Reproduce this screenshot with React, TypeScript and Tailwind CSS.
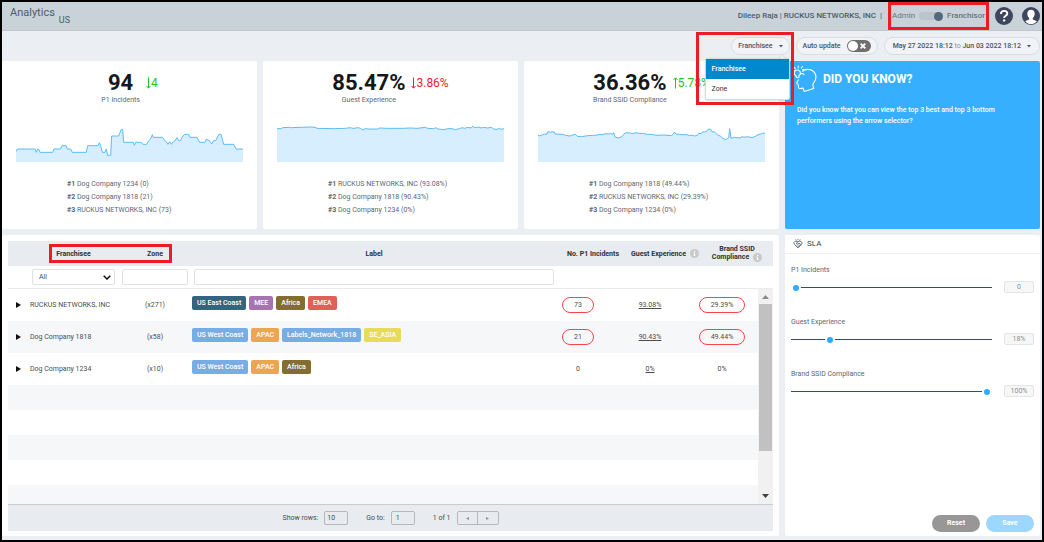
// Analytics dashboard for franchisors (incidents, guest experience, SSID compliance)
import { useState } from 'react';
import type { ReactNode } from 'react';
import clsx from 'clsx';

interface Kpi {
    title: string;
    value: string;
    delta: string;
    direction: 'up' | 'down';
    good: boolean;
    ranking: string[];
    /** Line of the area chart, in a 681 x 108 box */
    points: string;
}

const kpis: Kpi[] = [
    {
        title: 'P1 Incidents',
        value: '94',
        delta: '4',
        direction: 'down',
        good: true,
        ranking: ['Dog Company 1234 (0)', 'Dog Company 1818 (21)', 'RUCKUS NETWORKS, INC (73)'],
        points:
            '0,77 4,69 57,69 61,79 65,69 69,71 72,79 110,79 114,69 134,69 138,59 150,59 154,69 164,69 169,79 211,79 215,59 246,59 250,50 254,59 259,79 267,79 271,69 275,88 284,88 287,30 308,30 316,10 320,10 323,49 352,49 355,58 359,49 376,49 381,55 392,55 398,44 403,40 409,26 412,34 440,34 446,44 451,47 456,55 461,47 466,55 472,46 476,46 483,35 488,44 493,44 500,31 506,25 518,25 522,34 543,34 551,49 567,49 571,39 581,45 587,54 593,44 599,44 608,25 615,25 623,55 653,55 660,69 681,69',
    },
    {
        title: 'Guest Experience',
        value: '85.47%',
        delta: '3.86%',
        direction: 'down',
        good: false,
        ranking: ['RUCKUS NETWORKS, INC (93.08%)', 'Dog Company 1818 (90.43%)', 'Dog Company 1234 (0%)'],
        points:
            '0,8 13,8 17,5 40,4 44,5 70,4 100,3 114,4 120,7 170,8 205,7 220,5 228,7 244,5 250,7 258,12 264,8 275,9 302,9 308,6 330,7 380,7 400,6 420,7 445,4 452,7 470,8 477,5 483,9 500,11 512,8 525,8 535,11 547,8 556,5 563,7 572,4 582,6 588,1 594,5 606,3 612,6 620,4 632,6 643,4 650,9 660,10 668,7 672,10 681,8',
    },
    {
        title: 'Brand SSID Compliance',
        value: '36.36%',
        delta: '5.78%',
        direction: 'up',
        good: true,
        ranking: ['Dog Company 1818 (49.44%)', 'RUCKUS NETWORKS, INC (29.39%)', 'Dog Company 1234 (0%)'],
        points:
            '0,25 3,30 12,27 20,24 26,25 29,17 38,19 42,17 49,18 51,24 75,25 82,28 96,30 104,27 112,25 118,31 130,32 150,29 166,28 178,27 186,25 192,26 204,23 212,24 218,22 224,25 227,20 231,33 240,36 252,32 258,24 262,20 275,21 285,23 292,20 304,22 316,22 328,25 342,25 352,28 378,27 400,29 406,24 409,18 414,24 424,25 434,26 446,26 455,29 464,27 470,30 478,28 482,22 490,23 494,17 500,18 506,16 511,9 518,10 522,17 530,18 538,26 548,31 554,36 562,41 568,38 572,35 575,8 579,37 590,34 606,36 612,32 618,34 628,32 642,35 654,30 660,26 668,24 674,22 681,21',
    },
];

const labelColors = {
    east: 'bg-[#35657c]',
    mee: 'bg-[#a874b0]',
    africa: 'bg-[#836e2f]',
    emea: 'bg-[#df6059]',
    west: 'bg-[#77ade4]',
    apac: 'bg-[#eda54f]',
    asia: 'bg-[#e7db5b]',
};

interface Row {
    name: string;
    zones: string;
    labels: { text: string; color: keyof typeof labelColors }[];
    incidents: string;
    experience: string;
    compliance: string;
    breached: boolean;
}

const rows: Row[] = [
    {
        name: 'RUCKUS NETWORKS, INC',
        zones: '(x271)',
        labels: [
            { text: 'US East Coast', color: 'east' },
            { text: 'MEE', color: 'mee' },
            { text: 'Africa', color: 'africa' },
            { text: 'EMEA', color: 'emea' },
        ],
        incidents: '73',
        experience: '93.08%',
        compliance: '29.39%',
        breached: true,
    },
    {
        name: 'Dog Company 1818',
        zones: '(x58)',
        labels: [
            { text: 'US West Coast', color: 'west' },
            { text: 'APAC', color: 'apac' },
            { text: 'Labels_Network_1818', color: 'west' },
            { text: 'SE_ASIA', color: 'asia' },
        ],
        incidents: '21',
        experience: '90.43%',
        compliance: '49.44%',
        breached: true,
    },
    {
        name: 'Dog Company 1234',
        zones: '(x10)',
        labels: [
            { text: 'US West Coast', color: 'west' },
            { text: 'APAC', color: 'apac' },
            { text: 'Africa', color: 'africa' },
        ],
        incidents: '0',
        experience: '0%',
        compliance: '0%',
        breached: false,
    },
];

const slas = [
    { id: 'sla-p1', label: 'P1 Incidents', initial: 0, unit: '' },
    { id: 'sla-guest', label: 'Guest Experience', initial: 18, unit: '%' },
    { id: 'sla-ssid', label: 'Brand SSID Compliance', initial: 100, unit: '%' },
];

/** Red frame drawn over a part of the page */
function Highlight({ className }: { className: string }) {
    return <div className={clsx('pointer-events-none absolute border-3 border-[#ed1c24]', className)} />;
}

function Pill({ children, className }: { children: ReactNode; className?: string }) {
    return (
        <div
            className={clsx(
                'flex h-[18px] items-center rounded-full border border-[#d9dde2] bg-[#f1f3f7] font-medium text-[#4a5560]',
                className,
            )}
        >
            {children}
        </div>
    );
}

function Caret() {
    return (
        <svg className="h-[3px] w-1" viewBox="0 0 4 3" fill="currentColor" aria-hidden="true">
            <path d="M0 0h4L2 2.6z" />
        </svg>
    );
}

function InfoIcon() {
    return (
        <svg className="size-[9px] shrink-0" viewBox="0 0 18 18" aria-hidden="true">
            <circle cx="9" cy="9" r="9" fill="#c9c9c9" />
            <path d="M8 3.6h2.4v2.2H8zM7 7.4h3.2v5.4h1.2v1.4H6.8v-1.4H8V8.8H7z" fill="#fff" />
        </svg>
    );
}

function HeadIcon() {
    return (
        <svg
            className="h-7 w-6 shrink-0"
            viewBox="0 0 24 28"
            fill="none"
            stroke="#fff"
            strokeWidth="1.1"
            strokeLinecap="round"
            strokeLinejoin="round"
            aria-hidden="true"
        >
            <path d="M9.5 6.2C11 5 13 4.3 15 4.4c4.600 0 8 3.400 8 7.600 0 2.600-1 4.500-2.500 6.200-.9 1.100-.9 2-.4 3.500l.6 1.700-9.500 3-1.200-3.400c-1.500.5-3 .9-4 .1-.9-.8-.5-2.200-.7-3.300-.2-1-.9-1-1.500-1.400-.6-.5 1.200-2.300 1.500-3.600" />
            <path d="M3.600 12.500 3 10.800C1.800 10.200 1 9 1.200 7.700c.2-1.700 1.700-2.900 3.400-2.700 1.800.2 3 1.700 2.800 3.400-.1 1-.7 1.800-1.500 2.300l.1 1.600zM7.500 9c1.500-.8 3-.5 3.500.6" />
            <path d="M5.200 1v1.700M1.200 2.200l1 1.500M9.500 1.500 8.300 3M.2 5.200l.8.3M11 4.200l-1.600.8" />
        </svg>
    );
}

function SlaIcon() {
    return (
        <svg
            className="size-[10px]"
            viewBox="0 0 20 20"
            fill="none"
            stroke="#5d6972"
            strokeWidth="1.8"
            strokeLinejoin="round"
            aria-hidden="true"
        >
            <path d="M1.500 7.500 5 4l4 1.500L14 4l4.500 3.500-2 4L10 18l-6.500-6.500z" />
            <path d="M9 5.500 7 9l2.500 1 2.500-2 4.500 4M6 13l2-2M8.500 15l2-2M12 15.500l-2-2M14 13.500l-2.500-2.300M10 0v2.500M5.500 1l1 2M14.500 1l-1 2" />
        </svg>
    );
}

function Header() {
    return (
        <header className="flex h-[29px] items-center border-b border-[#bfc8cf] bg-[#c9d2d9] text-[#4d5b66]">
            <h1 className="self-start pt-1 pl-2 text-[11px] leading-[14px]">Analytics</h1>
            <span className="pt-2.5 pl-1 text-[9px]">US</span>
            <div className="ml-auto flex items-center pr-0.5">
                <span className="text-[8px] font-medium">Dileep Raja | RUCKUS NETWORKS, INC &nbsp;|</span>
                <div className="relative ml-2.5 flex items-center text-[8px] text-[#66727c]">
                    <span>Admin</span>
                    <label className="mx-1 flex h-2 w-6 items-center justify-end rounded-full bg-[#bcc4cb]">
                        <input type="checkbox" role="switch" defaultChecked className="sr-only" aria-label="Franchisor" />
                        <span className="size-[9px] rounded-full bg-[#51697a]" />
                    </label>
                    <span className="font-medium">Franchisor</span>
                    <Highlight className="-inset-x-1 -inset-y-2" />
                </div>
                <button type="button" className="ml-2.5 size-[18px]" aria-label="Help">
                    <svg className="size-full" viewBox="0 0 18 18" aria-hidden="true">
                        <circle cx="9" cy="9" r="9" fill="#3d465e" />
                        <path
                            d="M5.900 7c0-1.900 1.300-3.100 3.200-3.100s3.200 1.100 3.200 2.800c0 2-3.200 2.200-3.200 4.200"
                            fill="none"
                            stroke="#fff"
                            strokeWidth="1.900"
                        />
                        <circle cx="9.100" cy="13.400" r="1.200" fill="#fff" />
                    </svg>
                </button>
                <button type="button" className="ml-[9px] size-[18px]" aria-label="Account">
                    <svg className="size-full" viewBox="0 0 18 18" aria-hidden="true">
                        <circle cx="9" cy="9" r="9" fill="#3d465e" />
                        <path
                            d="M9 2.800c2.300 0 3.700 1.600 3.700 3.900 0 1.900-.8 3.500-1.900 4.400v1.300c2 .6 3.300 1.100 4 2.100A8.200 8.200 0 0 1 9 17.200a8.200 8.200 0 0 1-5.800-2.700c.7-1 2-1.500 4-2.100v-1.300c-1.100-.9-1.900-2.500-1.900-4.400 0-2.300 1.400-3.900 3.700-3.900z"
                            fill="#fff"
                        />
                    </svg>
                </button>
            </div>
        </header>
    );
}

function Toolbar() {
    return (
        <div className="flex h-[30px] items-center justify-end gap-1.5 text-[7px]">
            <div className="relative z-10">
                <Pill>
                    <button type="button" className="flex items-center gap-1.5 px-1.5" aria-haspopup="listbox" aria-expanded="true">
                        Franchisee <Caret />
                    </button>
                </Pill>
                {/* Open grouping menu */}
                <svg className="absolute top-[18px] right-1 h-1 w-2" viewBox="0 0 8 4" fill="#fff" stroke="#d5d9dd" aria-hidden="true">
                    <path d="M0 4l4-3.500L8 4" />
                </svg>
                <ul
                    role="listbox"
                    aria-label="Group by"
                    className="absolute top-[21px] right-0 w-[85px] rounded-xs border border-[#d5d9dd] bg-white shadow-sm"
                >
                    <li role="option" aria-selected="true" className="flex h-5 items-center bg-[#0088ce] px-1.5 font-medium text-white">
                        Franchisee
                    </li>
                    <li role="option" aria-selected="false" className="flex h-5 items-center px-1.5 text-[#333]">
                        Zone
                    </li>
                </ul>
                <Highlight className="-top-[5px] -right-1 h-[73px] w-[98px]" />
            </div>
            <Pill className="gap-1.5 px-1.5">
                <span>Auto update</span>
                <label className="flex h-3 w-6 items-center justify-between rounded-full bg-[#6f6f6f] px-px">
                    <input type="checkbox" role="switch" className="sr-only" aria-label="Auto update" />
                    <span className="size-[10px] rounded-full bg-white" />
                    <svg className="mr-1 size-[6px]" viewBox="0 0 6 6" stroke="#fff" strokeWidth="1.900" aria-hidden="true">
                        <path d="M.7.7l4.600 4.600M5.300.7.7 5.300" />
                    </svg>
                </label>
            </Pill>
            <Pill>
                <button type="button" className="flex items-center gap-1.5 px-2">
                    <span>
                        May 27 2022 18:12 <span className="font-normal text-[#8a949c]">to</span> Jun 03 2022 18:12
                    </span>
                    <Caret />
                </button>
            </Pill>
        </div>
    );
}

function KpiCard({ kpi }: { kpi: Kpi }) {
    return (
        <section className="flex flex-col rounded-xs bg-white px-3.5 pt-2.5">
            <div className="flex justify-center gap-1.5">
                <div className="flex flex-col items-center">
                    <strong className="text-[22px] leading-6 font-bold text-[#15181b]">{kpi.value}</strong>
                    <h2 className="text-[7px] leading-[10px] text-[#5b6770]">{kpi.title}</h2>
                </div>
                <div className={clsx('flex h-6 items-center text-[12px]', kpi.good ? 'text-[#23c423]' : 'text-[#ed1c24]')}>
                    <svg
                        className={clsx('h-3 w-[5px]', kpi.direction === 'up' && 'rotate-180')}
                        viewBox="0 0 5 12"
                        fill="none"
                        stroke="currentColor"
                        aria-hidden="true"
                    >
                        <path d="M2.500.5v10.500M.5 9l2 2.200L4.500 9" />
                    </svg>
                    {kpi.delta}
                </div>
            </div>
            <svg className="mt-[21px] h-9 w-full" viewBox="0 0 681 108" preserveAspectRatio="none" aria-hidden="true">
                <polygon points={`0,108 ${kpi.points} 681,108`} fill="#d6eeff" />
                <polyline points={kpi.points} fill="none" stroke="#5cbcf8" vectorEffect="non-scaling-stroke" />
            </svg>
            <ol className="mt-4 pb-3 pl-[51px] text-[7px] leading-[13px] text-[#5b6770]">
                {kpi.ranking.map((entry, i) => (
                    <li key={entry}>
                        <b>#{i + 1}</b> {entry}
                    </li>
                ))}
            </ol>
        </section>
    );
}

function TipCard() {
    return (
        <section className="rounded-xs bg-[#36afff] pt-1 text-white">
            <div className="flex items-center gap-1.5 pl-2">
                <HeadIcon />
                <h2 className="text-[12px] font-bold">DID YOU KNOW?</h2>
            </div>
            <p className="px-3 pt-3 text-[7px] leading-[11px] font-medium">
                Did you know that you can view the top 3 best and top 3 bottom performers using the arrow selector?
            </p>
        </section>
    );
}

const numCell = 'flex w-[72px] shrink-0 items-center justify-center';

function FranchiseeTable() {
    return (
        <section className="col-span-3 rounded-xs bg-white px-1.5 pt-1.5 pb-[5px]">
            <table className="flex flex-col text-[7px] leading-2 text-[#4c4c4c]">
                <thead className="block">
                    <tr className="flex h-[25px] items-stretch bg-[#e8ebef] font-bold text-[#2b3238]">
                        <th className="w-5 shrink-0" aria-label="Expand" />
                        <th className="relative flex w-[91px] shrink-0 items-center justify-center">
                            Franchisee
                            <Highlight className="top-[3px] left-[21px] h-[19px] w-[123px]" />
                        </th>
                        <th className="flex w-[72px] shrink-0 items-center justify-center">Zone</th>
                        <th className="flex flex-1 items-center justify-center">Label</th>
                        <th className={numCell}>No. P1 Incidents</th>
                        <th className={clsx(numCell, 'gap-1')}>
                            Guest Experience <InfoIcon />
                        </th>
                        <th className={clsx(numCell, 'flex-col')}>
                            <span>Brand SSID</span>
                            <span className="flex gap-1">
                                Compliance <InfoIcon />
                            </span>
                        </th>
                    </tr>
                    <tr className="flex h-[23px] items-center border-b border-[#e9ebed]">
                        <td className="w-5 shrink-0" />
                        <td className="relative w-[91px] shrink-0 px-1">
                            <select
                                aria-label="Filter by franchisee"
                                className="block h-4 w-full appearance-none rounded-xs border border-[#dfe2e5] bg-white px-1.5"
                            >
                                <option>All</option>
                            </select>
                            <svg
                                className="pointer-events-none absolute top-1.5 right-2 h-[5px] w-2"
                                viewBox="0 0 8 5"
                                fill="none"
                                stroke="#111"
                                strokeWidth="1.500"
                                aria-hidden="true"
                            >
                                <path d="M.7.7 4 4 7.300.7" />
                            </svg>
                        </td>
                        <td className="w-[72px] shrink-0 px-[3px]">
                            <input aria-label="Filter by zone" className="block h-4 w-full rounded-xs border border-[#dfe2e5] px-1" />
                        </td>
                        <td className="flex-1 px-[3px]">
                            <input aria-label="Filter by label" className="block h-4 w-full rounded-xs border border-[#dfe2e5] px-1" />
                        </td>
                        <td className={numCell} />
                        <td className={numCell} />
                        <td className={numCell} />
                    </tr>
                </thead>
                <tbody className="relative block h-[215px] overflow-hidden pr-[15px]">
                    {rows.map((row) => (
                        <tr key={row.name} className="flex h-8 items-center even:bg-[#f6f7f9]">
                            <td className="flex w-5 shrink-0 justify-center">
                                <button type="button" aria-label={`Expand ${row.name}`}>
                                    <svg className="h-[6px] w-[5px]" viewBox="0 0 5 6" fill="#111" aria-hidden="true">
                                        <path d="M0 0l5 3-5 3z" />
                                    </svg>
                                </button>
                            </td>
                            <td className="w-[91px] shrink-0 pl-0.5">{row.name}</td>
                            <td className="w-[72px] shrink-0 text-center">{row.zones}</td>
                            <td className="flex flex-1 gap-[3px] pb-1 pl-px">
                                {row.labels.map((label) => (
                                    <span
                                        key={label.text}
                                        className={clsx(
                                            'flex h-[14px] items-center rounded-xs px-[5px] font-medium text-white',
                                            labelColors[label.color],
                                        )}
                                    >
                                        {label.text}
                                    </span>
                                ))}
                            </td>
                            <td className={numCell}>
                                <span
                                    className={clsx(
                                        'flex h-4 items-center justify-center rounded-full border px-[11px]',
                                        row.breached ? 'border-[#f0484c]' : 'border-transparent',
                                    )}
                                >
                                    {row.incidents}
                                </span>
                            </td>
                            <td className={numCell}>
                                <a href="#experience" className="underline">
                                    {row.experience}
                                </a>
                            </td>
                            <td className={numCell}>
                                <span
                                    className={clsx(
                                        'flex h-4 items-center justify-center rounded-full border px-[11px]',
                                        row.breached ? 'border-[#f0484c]' : 'border-transparent',
                                    )}
                                >
                                    {row.compliance}
                                </span>
                            </td>
                        </tr>
                    ))}
                    {/* Empty rows keep the striping down to the pager */}
                    {[0, 1, 2, 3, 4].map((n) => (
                        <tr key={n} className="flex h-[25px] even:bg-[#f6f7f9]">
                            <td className="flex-1" />
                        </tr>
                    ))}
                    <tr className="absolute inset-y-0 right-0 flex w-[15px]">
                        <td className="flex flex-1 flex-col items-center bg-[#f1f1f1]">
                            <svg className="h-[15px] w-[7px]" viewBox="0 0 7 15" fill="#8a8a8a" aria-hidden="true">
                                <path d="M0 10l3.500-4L7 10z" />
                            </svg>
                            <div className="h-[147px] w-[13px] bg-[#c1c1c1]" />
                            <svg className="mt-auto h-[15px] w-[7px]" viewBox="0 0 7 15" fill="#404040" aria-hidden="true">
                                <path d="M0 5l3.500 4L7 5z" />
                            </svg>
                        </td>
                    </tr>
                </tbody>
            </table>
            <Pager />
        </section>
    );
}

function Pager() {
    return (
        <div className="flex h-[27px] items-center justify-center border-t border-[#c9cdd1] bg-[#e8ebef] text-[7px] text-[#4c4c4c]">
            <label className="flex items-center gap-1.5">
                Show rows:
                <input defaultValue="10" className="h-[14px] w-6 rounded-xs border border-[#b4b8bc] px-0.5" />
            </label>
            <label className="ml-[18px] flex items-center gap-1.5">
                Go to:
                <input defaultValue="1" className="h-[14px] w-6 rounded-xs border border-[#b4b8bc] px-1" />
            </label>
            <span className="ml-[18px]">1 of 1</span>
            <div className="ml-1.5 flex h-[14px] divide-x divide-[#b4b8bc] rounded-xs border border-[#b4b8bc] text-[#8d9296]">
                <button type="button" className="flex w-5 items-center justify-center" aria-label="Previous page">
                    <svg className="size-[3px]" viewBox="0 0 3 3" fill="currentColor" aria-hidden="true">
                        <path d="M3 0v3L0 1.500z" />
                    </svg>
                </button>
                <button type="button" className="flex w-5 items-center justify-center" aria-label="Next page">
                    <svg className="size-[3px]" viewBox="0 0 3 3" fill="currentColor" aria-hidden="true">
                        <path d="M0 0v3l3-1.500z" />
                    </svg>
                </button>
            </div>
        </div>
    );
}

function SlaPanel() {
    const [values, setValues] = useState(slas.map((s) => s.initial));

    return (
        <section className="flex flex-col rounded-xs bg-white">
            <h2 className="flex h-[19px] items-center gap-1 border-b border-[#eceef0] pl-2 text-[8px] text-[#333f48]">
                <SlaIcon /> SLA
            </h2>
            <div className="flex flex-col gap-6 px-1.5 pt-[11px]">
                {slas.map((sla, i) => (
                    <div key={sla.id}>
                        <label htmlFor={sla.id} className="block text-[7px] leading-[10px] text-[#5b6770]">
                            {sla.label}
                        </label>
                        <div className="flex items-center gap-3 pt-1.5">
                            <input
                                id={sla.id}
                                type="range"
                                min={0}
                                max={100}
                                value={values[i]}
                                onChange={(e) => setValues(values.map((v, n) => (n === i ? Number(e.target.value) : v)))}
                                className="h-3 min-w-0 flex-1 appearance-none bg-transparent
                         [&::-webkit-slider-runnable-track]:h-px [&::-webkit-slider-runnable-track]:bg-[#34505f]
                         [&::-webkit-slider-thumb]:-mt-1 [&::-webkit-slider-thumb]:size-[10px]
                         [&::-webkit-slider-thumb]:appearance-none [&::-webkit-slider-thumb]:rounded-full
                         [&::-webkit-slider-thumb]:border-2 [&::-webkit-slider-thumb]:border-white
                         [&::-webkit-slider-thumb]:bg-[#2eaaff]"
                            />
                            <input
                                readOnly
                                aria-label={`${sla.label} value`}
                                value={`${values[i]}${sla.unit}`}
                                className="h-3 w-[30px] rounded-xs border border-[#e2e4e6] bg-[#f7f7f7] text-center text-[7px] text-[#8a8f94]"
                            />
                        </div>
                    </div>
                ))}
            </div>
            <div className="mt-auto flex justify-end gap-1.5 px-1.5 pb-1 text-[7px] font-bold text-white">
                <button type="button" className="h-[17px] w-12 rounded-full bg-[#979797]">
                    Reset
                </button>
                <button type="button" className="h-[17px] w-12 rounded-full bg-[#9bd7ff]">
                    Save
                </button>
            </div>
        </section>
    );
}

export default function App() {
    return (
        <div className="flex min-h-screen flex-col border-2 border-black bg-[#ebeff4] font-[Roboto,sans-serif]">
            <Header />
            <main className="flex flex-1 flex-col pr-0.5 pb-1">
                <Toolbar />
                <div className="grid grid-cols-4 gap-1.5">
                    {kpis.map((kpi) => (
                        <KpiCard key={kpi.title} kpi={kpi} />
                    ))}
                    <TipCard />
                    <FranchiseeTable />
                    <SlaPanel />
                </div>
            </main>
        </div>
    );
}
